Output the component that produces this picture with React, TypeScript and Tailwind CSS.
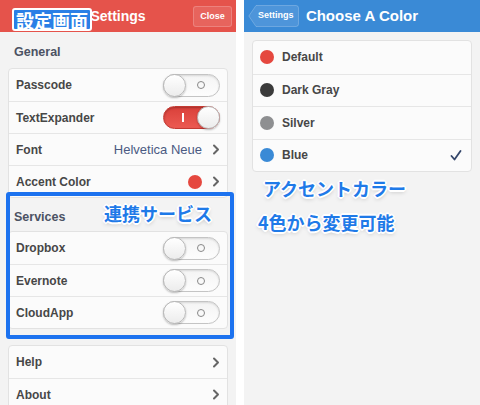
import React from "react";

const font = { fontFamily: '"Liberation Sans", Arial, "Noto Sans CJK JP", sans-serif' };
const jp = { fontFamily: '"Noto Sans CJK JP", "Liberation Sans", sans-serif' };

function Chevron() {
  return (
    <svg width="8" height="11" viewBox="0 0 8 11" className="shrink-0">
      <polyline points="2,1.5 6,5.5 2,9.5" fill="none" stroke="#666" strokeWidth="2" strokeLinecap="round" strokeLinejoin="round" />
    </svg>
  );
}

function Toggle({ on }: { on?: boolean }) {
  if (on) {
    return (
      <div className="relative h-[23px] w-[57px] rounded-full border border-[#c43a33] bg-gradient-to-b from-[#d9403a] to-[#ec5a52] shadow-[inset_0_1px_2px_rgba(0,0,0,0.25)]">
        <div className="absolute left-[18px] top-[6px] h-[9px] w-[2px] bg-white" />
        <div className="absolute right-[-1px] top-[-1px] h-[23px] w-[23px] rounded-full border border-[#b8b8b8] bg-gradient-to-b from-white to-[#ececec] shadow-[0_1px_2px_rgba(0,0,0,0.25)]" />
      </div>
    );
  }
  return (
    <div className="relative h-[23px] w-[57px] rounded-full border border-[#c4c4c4] bg-gradient-to-b from-[#f4f4f4] to-[#fdfdfd] shadow-[inset_0_1px_2px_rgba(0,0,0,0.12)]">
      <div className="absolute right-[14px] top-[6.5px] h-[8px] w-[8px] rounded-full border-[1.5px] border-[#888]" />
      <div className="absolute left-[-1px] top-[-1px] h-[23px] w-[23px] rounded-full border border-[#b8b8b8] bg-gradient-to-b from-white to-[#ececec] shadow-[0_1px_2px_rgba(0,0,0,0.25)]" />
    </div>
  );
}

function Row({ label, children, first }: { label: string; children?: React.ReactNode; first?: boolean }) {
  return (
    <div className={`flex h-8 items-center justify-between pl-[7px] pr-[7px] ${first ? "" : "border-t border-[#e6e6e6]"}`}>
      <span className="text-[12px] font-bold text-[#474747]">{label}</span>
      <div className="flex items-center gap-[10px]">{children}</div>
    </div>
  );
}

function SectionLabel({ text, pt, pb }: { text: string; pt: string; pb: string }) {
  return (
    <div className={`px-[14px] ${pt} ${pb}`}>
      <div className="h-4 text-[12.5px] font-bold leading-4 text-[#4b5263]">{text}</div>
    </div>
  );
}

const outline = {
  textShadow:
    "1px 1px 0 #fff, -1px 1px 0 #fff, 1px -1px 0 #fff, -1px -1px 0 #fff, 2px 0 0 #fff, -2px 0 0 #fff, 0 2px 0 #fff, 0 -2px 0 #fff, 0 2px 4px rgba(0,0,0,0.25)",
};

function ColorRow({ color, label, first, check }: { color: string; label: string; first?: boolean; check?: boolean }) {
  return (
    <div className={`flex h-[32.5px] items-center pl-[7px] pr-[9px] ${first ? "" : "border-t border-[#e6e6e6]"}`}>
      <div className="h-[14px] w-[14px] rounded-full" style={{ backgroundColor: color }} />
      <span className="ml-[8px] flex-1 text-[12px] font-bold text-[#474747]">{label}</span>
      {check && (
        <svg width="12" height="11" viewBox="0 0 12 11">
          <polyline points="1.5,6 4.5,9.5 10.5,1" fill="none" stroke="#34466a" strokeWidth="1.8" strokeLinecap="round" strokeLinejoin="round" />
        </svg>
      )}
    </div>
  );
}

export default function App() {
  return (
    <div className="flex h-[405px] w-[480px] gap-2 overflow-hidden bg-white" style={font}>
      {/* Left panel */}
      <div className="relative flex h-full w-[236px] flex-col bg-[#f3f3f3]">
        <div className="relative flex h-8 shrink-0 items-center justify-center bg-[#e5534b]">
          <span className="text-[14px] font-bold text-white">Settings</span>
          <div className="absolute right-[4px] top-[6px] flex h-[21px] w-[39px] items-center justify-center rounded-[3px] border border-white/20 bg-white/10 text-[9px] font-bold text-white">
            Close
          </div>
          <div
            className="absolute left-[12px] top-[8px] flex h-[23px] items-center rounded-[3px] border-2 border-white bg-[#2a7fe6] px-[2px] text-[18px] font-bold leading-none text-white"
            style={jp}
          >
            設定画面
          </div>
        </div>

        <SectionLabel text="General" pt="pt-3" pb="pb-2" />
        <div className="mx-2 rounded-[4px] border border-[#e2e2e2] bg-[#fbfbfb]">
          <Row label="Passcode" first>
            <Toggle />
          </Row>
          <Row label="TextExpander">
            <Toggle on />
          </Row>
          <Row label="Font">
            <span className="text-[13px] text-[#4a5a82]">Helvetica Neue</span>
            <Chevron />
          </Row>
          <Row label="Accent Color">
            <div className="h-[14px] w-[14px] rounded-full bg-[#e5483f]" />
            <Chevron />
          </Row>
        </div>

        <SectionLabel text="Services" pt="pt-[11px]" pb="pb-[6px]" />
        <div className="mx-2 rounded-[4px] border border-[#e2e2e2] bg-[#fbfbfb]">
          <Row label="Dropbox" first>
            <Toggle />
          </Row>
          <Row label="Evernote">
            <Toggle />
          </Row>
          <Row label="CloudApp">
            <Toggle />
          </Row>
        </div>

        <div className="mx-2 mt-4 rounded-[4px] border border-[#e2e2e2] bg-[#fbfbfb]">
          <Row label="Help" first>
            <Chevron />
          </Row>
          <Row label="About">
            <Chevron />
          </Row>
        </div>

        {/* annotation overlay */}
        <div className="pointer-events-none absolute left-[6px] top-[192px] h-[147px] w-[228px] rounded-[3px] border-[4px] border-[#1c72ef]" />
        <div className="absolute left-[104px] top-[204px] text-[18px] font-bold leading-none text-[#1f7ae8]" style={{ ...jp, ...outline }}>
          連携サービス
        </div>
      </div>

      {/* Right panel */}
      <div className="relative flex h-full w-[236px] flex-col bg-[#f3f3f3]">
        <div className="relative flex h-8 shrink-0 items-center justify-center bg-[#3a8ad6]">
          <span className="text-[15px] font-bold text-white">Choose A Color</span>
          <div className="absolute left-[4px] top-[5px] flex h-[22px] w-[51px] items-center">
            <svg width="51" height="22" viewBox="0 0 51 22" className="absolute inset-0">
              <path d="M8,0.5 H48 a2.5,2.5 0 0 1 2.5,2.5 V19 a2.5,2.5 0 0 1 -2.5,2.5 H8 L0.8,11 Z" fill="rgba(255,255,255,0.1)" stroke="rgba(255,255,255,0.22)" strokeWidth="1" />
            </svg>
            <span className="relative ml-[10px] text-[9px] font-bold text-white">Settings</span>
          </div>
        </div>

        <div className="mx-2 mt-2 rounded-[4px] border border-[#e2e2e2] bg-[#fbfbfb]">
          <ColorRow color="#e5483f" label="Default" first />
          <ColorRow color="#3b3b3b" label="Dark Gray" />
          <ColorRow color="#8e8f91" label="Silver" />
          <ColorRow color="#3a8ad6" label="Blue" check />
        </div>

        <div className="mt-[6px] flex flex-col gap-[14px] pl-[14px] text-[18px] font-bold leading-5 text-[#1f7ae8]" style={{ ...jp, ...outline }}>
          <span className="pl-[5px]">アクセントカラー</span>
          <span>4色から変更可能</span>
        </div>
      </div>
    </div>
  );
}
